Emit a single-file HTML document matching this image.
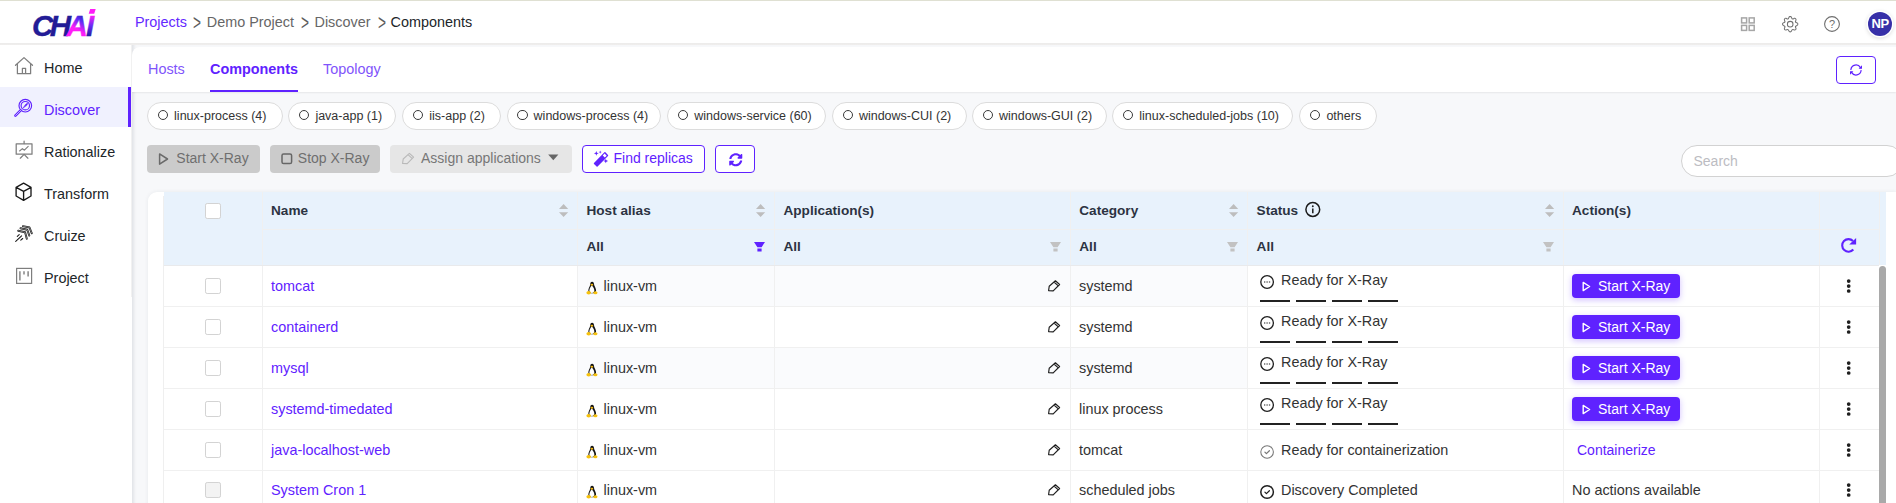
<!DOCTYPE html>
<html lang="en">
<head>
<meta charset="utf-8">
<title>CHAi - Components</title>
<style>
*{box-sizing:border-box;margin:0;padding:0}
html,body{width:1896px;height:503px;overflow:hidden;background:#fff}
body{font-family:"Liberation Sans",Arial,sans-serif;color:#212529;position:relative;font-size:14.4px}
.abs{position:absolute}
svg{position:absolute;overflow:visible}
#topline{left:0;top:0;width:1896px;height:1px;background:#dfe0d2}
#header{left:0;top:1px;width:1896px;height:42px;background:#fff;z-index:5}
#hband{left:0;top:43px;width:1896px;height:2px;background:linear-gradient(#ecebea,#f0eeed);z-index:5}
#crumbs{left:0.5px;top:3px;height:36px;line-height:36px;font-size:14.4px;white-space:nowrap;color:#212529}
#crumbs span{position:absolute;top:0}
#crumbs .p{color:#6428ff}
#crumbs .g{color:#666}
#crumbs .s{color:#5c5c5c;font-size:18px;top:0.5px;transform:scale(.76,1.25);transform-origin:0 52%}
#avatar{left:1868.2px;top:11px;width:24px;height:24px;border-radius:50%;background:#3730a8;color:#fff;font-weight:bold;font-size:13px;line-height:24px;text-align:center;box-shadow:0 0 0 1.5px #fff,0 1px 4px 1px rgba(0,0,0,.16);letter-spacing:-.3px}
#sidebar{left:0;top:45px;width:132px;height:458px;background:#fff;z-index:3}
#sbline{left:131px;top:45px;width:1px;height:252px;background:#f1f1f1;z-index:4}
.nav{position:absolute;left:0;width:131px;height:40px;font-size:14.4px;color:#212529;white-space:nowrap}
.nav span{position:absolute;left:44px;top:3px;height:40px;line-height:40px}
.nav.on{background:#f0f1fe;color:#5f22ff;border-right:3px solid #5f22ff}
#main{left:132px;top:45px;width:1764px;height:458px;background:#f7f8fa;z-index:1;box-shadow:inset 4px 0 3px -2px rgba(40,50,70,.10)}
#tabs{left:132px;top:47px;width:1764px;height:45px;background:#fff;border-top-left-radius:8px;box-shadow:0 1px 2px rgba(0,0,0,.07);z-index:2}
.tab{position:absolute;top:0;height:45px;line-height:44px;font-size:14.4px;color:#7f54fb;white-space:nowrap}
.tab.on{color:#5f22ff;font-weight:bold;border-bottom:2px solid #5f22ff}
#rbtn{left:1836px;top:56px;width:40px;height:28px;border:1px solid #5f22ff;border-radius:4px;background:#fff;z-index:3}
#chips{left:0;top:102px;z-index:2}
.chip{position:absolute;top:0;height:28px;line-height:26px;border:1px solid #dcdcdc;border-radius:14px;background:#fff;font-size:12.5px;color:#333;white-space:nowrap;padding:0 0 0 26px}
.chip i{position:absolute;left:9.9px;top:7px;width:10.2px;height:10.2px;border:1.15px solid #3a3a3a;border-radius:50%}
.btn{position:absolute;top:145px;height:28px;line-height:26px;border-radius:4px;font-size:14px;white-space:nowrap;z-index:2}
.btn span{position:absolute;top:0}
#search{left:1681px;top:145px;width:222px;height:32px;border:1px solid #d2d2d2;border-radius:16px;background:#fff;font-size:14px;color:#bcbcc2;line-height:30px;padding-left:11.5px;z-index:2}
#tbl{left:148px;top:192px;width:1748px;height:320px;background:#fff;border-top-left-radius:9px;z-index:2;box-shadow:0 0 4px rgba(30,40,60,.07)}
#thead{left:164px;top:192px;width:1722px;height:73px;background:#e8f2fc;z-index:3}
#hshadow{left:164px;top:265px;width:1715px;height:1px;background:#e9eaec;z-index:3}
.th{position:absolute;height:37px;line-height:37px;font-size:13.6px;font-weight:bold;color:#2c3342;white-space:nowrap;z-index:4}
.row{position:absolute;left:164px;width:1715px;height:41px;border-bottom:1px solid #f0f0f0;background:#fff;z-index:3}
.tint{position:absolute;top:0;height:40px;background:#fafbfd}
.c{position:absolute;top:0;height:41px;line-height:41px;white-space:nowrap;font-size:14.4px;color:#333}
.vl{position:absolute;width:1px;background:#f0f0f0;z-index:4}
.cb{position:absolute;width:16px;height:16px;border:1px solid #d3d3d3;border-radius:2.2px;background:#fff;z-index:4}
.l{color:#5f22ff}
.xb{position:absolute;left:1408px;top:8px;width:108px;height:24px;border-radius:4px;background:#5f22ff;color:#fff;font-size:14px;line-height:24px;box-shadow:0 2px 6px rgba(95,34,255,.28)}
.xb span{position:absolute;left:26px;top:0}
.dash{position:absolute;top:33.5px;height:2.5px;width:30px;background:#222}
#scroll{left:1879px;top:266px;width:7px;height:250px;border-radius:3.5px;background:#a9a9a9;z-index:5}
</style>
</head>
<body>
<div id="topline" class="abs"></div>
<div id="hband" class="abs"></div>
<div id="header" class="abs">
<svg id="logo" style="left:28px;top:3px" width="76" height="38" viewBox="28 4 76 38">
<defs>
<linearGradient id="ga" gradientUnits="userSpaceOnUse" x1="88" y1="10.6" x2="70.9" y2="38.6"><stop offset="0" stop-color="#241c98"/><stop offset="0.18" stop-color="#2f20b0"/><stop offset="0.38" stop-color="#5a2cf5"/><stop offset="0.66" stop-color="#ff1cf7"/><stop offset="1" stop-color="#ff1cf7"/></linearGradient>
<linearGradient id="gi" gradientUnits="userSpaceOnUse" x1="87.6" y1="42" x2="90.1" y2="8.9"><stop offset="0" stop-color="#241c98"/><stop offset="0.22" stop-color="#2b1fa8"/><stop offset="0.5" stop-color="#6a2cf5"/><stop offset="0.8" stop-color="#ff1cf7"/><stop offset="1" stop-color="#ff1cf7"/></linearGradient>
</defs>
<text y="35.7" font-family="Liberation Sans, Arial, sans-serif" font-weight="bold" font-style="italic" font-size="29.6" fill="#231c96" stroke="#231c96" stroke-width=".35"><tspan x="32">C</tspan><tspan x="49.8">H</tspan><tspan x="66.6" fill="url(#ga)" stroke="url(#ga)">A</tspan><tspan x="86" fill="url(#gi)" stroke="url(#gi)" stroke-width=".3">I</tspan></text>
<polygon points="90.2,9 95.7,9 94.2,13.8 88.7,13.8" fill="#ff1cf7"/>
</svg>
<div id="crumbs" class="abs"><span class="p" style="left:134.4px">Projects</span><span class="s" style="left:192.6px">&gt;</span><span class="g" style="left:206.3px">Demo Project</span><span class="s" style="left:300.1px">&gt;</span><span class="g" style="left:314px">Discover</span><span class="s" style="left:377px">&gt;</span><span style="left:390px">Components</span></div>
<svg style="left:1740px;top:15px" width="16" height="16" viewBox="0 0 16 16" fill="none" stroke="#a6a6a6" stroke-width="1.5"><rect x="1.6" y="1.9" width="5" height="5"/><rect x="9.2" y="1.9" width="5" height="5"/><rect x="1.6" y="9.4" width="5" height="5"/><rect x="9.2" y="9.4" width="5" height="5"/></svg>
<svg style="left:1782px;top:14.800px" width="16.400" height="16.400" viewBox="0 0 16 16" fill="#707070"><path d="M8 4.754a3.246 3.246 0 1 0 0 6.492 3.246 3.246 0 0 0 0-6.492zM5.754 8a2.246 2.246 0 1 1 4.492 0 2.246 2.246 0 0 1-4.492 0z"/><path d="M9.796 1.343c-.527-1.79-3.065-1.79-3.592 0l-.094.319a.873.873 0 0 1-1.255.52l-.292-.16c-1.64-.892-3.433.902-2.54 2.541l.159.292a.873.873 0 0 1-.52 1.255l-.319.094c-1.79.527-1.79 3.065 0 3.592l.319.094a.873.873 0 0 1 .52 1.255l-.16.292c-.892 1.64.901 3.434 2.541 2.54l.292-.159a.873.873 0 0 1 1.255.52l.094.319c.527 1.79 3.065 1.79 3.592 0l.094-.319a.873.873 0 0 1 1.255-.52l.292.16c1.64.893 3.434-.902 2.54-2.541l-.159-.292a.873.873 0 0 1 .52-1.255l.319-.094c1.79-.527 1.79-3.065 0-3.592l-.319-.094a.873.873 0 0 1-.52-1.255l.16-.292c.893-1.64-.902-3.433-2.541-2.54l-.292.159a.873.873 0 0 1-1.255-.52l-.094-.319zm-2.633.283c.246-.835 1.428-.835 1.674 0l.094.319a1.873 1.873 0 0 0 2.693 1.115l.291-.16c.764-.415 1.6.42 1.184 1.185l-.159.292a1.873 1.873 0 0 0 1.116 2.692l.318.094c.835.246.835 1.428 0 1.674l-.319.094a1.873 1.873 0 0 0-1.115 2.693l.16.291c.415.764-.42 1.6-1.185 1.184l-.291-.159a1.873 1.873 0 0 0-2.693 1.116l-.094.318c-.246.835-1.428.835-1.674 0l-.094-.319a1.873 1.873 0 0 0-2.692-1.115l-.292.16c-.764.415-1.6-.42-1.184-1.185l.159-.291A1.873 1.873 0 0 0 1.945 8.93l-.319-.094c-.835-.246-.835-1.428 0-1.674l.319-.094A1.873 1.873 0 0 0 3.06 4.377l-.16-.292c-.415-.764.42-1.6 1.185-1.184l.292.159a1.873 1.873 0 0 0 2.692-1.115l.094-.319z"/></svg>
<svg style="left:1824px;top:15px" width="16" height="16" viewBox="0 0 16 16" fill="none" stroke="#6e6e6e"><circle cx="8" cy="8" r="7.4" stroke-width="1.1"/><text x="8" y="11.9" text-anchor="middle" font-family="Liberation Sans, Arial, sans-serif" font-size="11" fill="#6e6e6e" stroke="none">?</text></svg>
<div id="avatar" class="abs">NP</div>
</div>
<div id="sidebar" class="abs">
<div class="nav" style="top:0px"><svg style="left:14px;top:11px" width="20" height="19" viewBox="14 56 20 19" fill="none" stroke="#7e7e7e" stroke-width="1.25" stroke-linejoin="round" stroke-linecap="round"><path d="M15.5 65.3 L24 57.6 L32.5 65.3 M17.4 64.4 V73.7 H30.6 V64.4 M22.4 73.7 V68.3 H25.6 V73.7"/></svg><span>Home</span></div>
<div class="nav on" style="top:42px"><svg style="left:14px;top:11px" width="20" height="20" viewBox="14 98 20 20" fill="none" stroke="#5f22ff" stroke-width="1.15" stroke-linecap="round"><circle cx="25.3" cy="105.7" r="6.3"/><circle cx="25.3" cy="105.7" r="4.2"/><path d="M20.6 110.4 L15.4 115.6" stroke-width="2.6"/><path d="M20.6 110.4 L15.6 115.4" stroke="#f0f1fe" stroke-width=".7"/><path d="M22.9 108.1 L26.0 104.0 L27.7 103.3 L27.0 105.0 Z" fill="#5f22ff" stroke-width=".6"/></svg><span>Discover</span></div>
<div class="nav" style="top:84px"><svg style="left:14px;top:11px" width="20" height="20" viewBox="14 140 20 20" fill="none" stroke="#7e7e7e" stroke-width="1.25" stroke-linecap="round" stroke-linejoin="round"><rect x="16.2" y="143.8" width="15.8" height="10.4"/><path d="M24.1 141.2 V143.6 M24.1 154.4 L20.3 158.2 M24.1 154.4 L27.9 158.2"/><path d="M19.6 151 L22.4 148.6 L24.4 150.2 L28.2 146.4" stroke-width="1.1"/></svg><span>Rationalize</span></div>
<div class="nav" style="top:126px"><svg style="left:14px;top:11px" width="20" height="20" viewBox="14 182 20 20" fill="none" stroke="#1a1a1a" stroke-width="1.35" stroke-linejoin="round"><path d="M23.6 183.2 L31 187.3 V196 L23.6 200.4 L16.1 196 V187.3 Z M16.1 187.3 L23.6 191.4 L31 187.3 M23.6 191.4 V200.4"/></svg><span>Transform</span></div>
<div class="nav" style="top:168px"><svg style="left:14px;top:11px" width="20" height="20" viewBox="14 224 20 20" fill="none" stroke-linejoin="round" stroke-linecap="round"><path d="M22.9 226.1 L29.5 227.5 L31.8 233.3" stroke="#111" stroke-width="1.9"/><path d="M22.9 226.1 L29.5 227.5 L31.8 233.3" stroke="#fff" stroke-width=".45"/><path d="M20.5 228.3 L27.3 229.8 L29.3 235.6" stroke="#111" stroke-width="1.9"/><path d="M20.5 228.3 L27.3 229.8 L29.3 235.6" stroke="#fff" stroke-width=".45"/><path d="M18.2 230.7 L25.1 232.3 L26.8 238.8" stroke="#111" stroke-width="1.9"/><path d="M18.2 230.7 L25.1 232.3 L26.8 238.8" stroke="#fff" stroke-width=".45"/><g stroke="#1a1a1a" stroke-width="1.1"><path d="M15.700 241.400 L21.600 235.800"/><path d="M17.300 236.400 L19.200 234.700"/><path d="M20.800 240.200 L22.700 238.500"/></g></svg><span>Cruize</span></div>
<div class="nav" style="top:210px"><svg style="left:14px;top:11px" width="20" height="20" viewBox="14 266 20 20" fill="none" stroke="#7e7e7e" stroke-width="1.2"><rect x="16.6" y="268.4" width="15" height="15"/><path d="M19.9 271.3 V280.5 M24 271.3 V274.6 M28.1 271.3 V276.5" stroke-width="1.4"/></svg><span>Project</span></div>
</div>
<div id="sbline" class="abs"></div>
<div id="main" class="abs"></div>
<div id="tabs" class="abs"><div class="tab" style="left:16px">Hosts</div><div class="tab on" style="left:78px">Components</div><div class="tab" style="left:191px">Topology</div></div>
<div id="rbtn" class="abs"><svg style="left:8px;top:2px" width="22" height="22" viewBox="1845 59 22 22" fill="none" stroke="#5f22ff" stroke-width="1.25" stroke-linecap="round"><path d="M1850.9 69.5 A5.1 5.1 0 0 1 1860.4 67.6"/><path d="M1861.1 70.5 A5.1 5.1 0 0 1 1851.6 72.4"/><path d="M1862.0 65.3 V68.8 H1858.6 Z M1850.0 74.7 V71.2 H1853.4 Z" fill="#5f22ff" stroke="none"/></svg></div>
<div id="chips" class="abs"><div class="chip" style="left:147.1px;width:135.5px"><i></i>linux-process (4)</div><div class="chip" style="left:288.4px;width:108.1px"><i></i>java-app (1)</div><div class="chip" style="left:402.3px;width:98.5px"><i></i>iis-app (2)</div><div class="chip" style="left:506.6px;width:154.9px"><i></i>windows-process (4)</div><div class="chip" style="left:667.3px;width:158.9px"><i></i>windows-service (60)</div><div class="chip" style="left:831.9px;width:134.7px"><i></i>windows-CUI (2)</div><div class="chip" style="left:972px;width:134.5px"><i></i>windows-GUI (2)</div><div class="chip" style="left:1112.3px;width:181.1px"><i></i>linux-scheduled-jobs (10)</div><div class="chip" style="left:1299.4px;width:77.5px"><i></i>others</div></div>
<div class="btn" style="left:147px;width:113px;background:#cbcbcb;color:#6f6f6f"><svg style="left:11px;top:7px" width="12" height="14" viewBox="0 0 12 14" fill="none" stroke="#6a6a6a" stroke-width="1.5" stroke-linejoin="round"><path d="M1.600 1.900 L9.500 7 L1.600 12.100 Z"/></svg><span style="left:29.300px">Start X-Ray</span></div>
<div class="btn" style="left:270px;width:110px;background:#cbcbcb;color:#6f6f6f"><svg style="left:11px;top:8px" width="12" height="12" viewBox="0 0 12 12" fill="none" stroke="#666" stroke-width="1.5"><rect x="1" y="1" width="9.6" height="9.6" rx="1.6"/></svg><span style="left:27.800px">Stop X-Ray</span></div>
<div class="btn" style="left:390px;width:182px;background:#e6e6e6;color:#777"><svg style="left:12px;top:7.5px" width="12" height="12" viewBox="0 0 12 12" fill="none" stroke="#b9b9b9" stroke-width="1.1" stroke-linejoin="round"><path d="M.6 10.4 L1.2 6 L7.4 .4 L11.6 4.2 L5.2 10.6 Z M6 1.7 L10.3 5.6"/></svg><span style="left:31px">Assign applications</span><svg style="left:158px;top:9px" width="11" height="7" viewBox="0 0 11 7"><path d="M.2 .4 H10.4 L5.3 6.2 Z" fill="#666"/></svg></div>
<div class="btn" style="left:582px;width:123px;background:#fff;color:#5f22ff;border:1px solid #5f22ff;line-height:24px"><svg style="left:10px;top:3px" width="18" height="18" viewBox="593 150 18 18" fill="#5f22ff"><path d="M594.0 164.0 L604.4 153.3 Q604.9 152.800 605.400 153.300 L608.0 155.900 Q608.500 156.400 608.0 156.900 L597.600 167.500 Q597.100 168.0 596.600 167.500 L594.0 165.0 Q593.500 164.500 594.0 164.0 Z M602.700 156.500 L604.800 158.600 L606.700 156.700 L604.600 154.600 Z" fill-rule="evenodd"/><path d="M596.300 151.900 L596.950 153.650 L598.700 154.300 L596.950 154.950 L596.300 156.700 L595.650 154.950 L593.900 154.300 L595.650 153.650 Z"/><path d="M600.200 151.500 L600.600 152.700 L601.800 153.100 L600.600 153.500 L600.200 154.700 L599.800 153.500 L598.600 153.100 L599.800 152.700 Z"/><path d="M605.800 159.700 L606.450 161.350 L608.100 162.0 L606.450 162.650 L605.800 164.300 L605.150 162.650 L603.500 162.0 L605.150 161.350 Z"/></svg><span style="left:30.5px">Find replicas</span></div>
<div class="btn" style="left:715px;width:40px;background:#fff;border:1px solid #5f22ff"><svg style="left:12.5px;top:6.5px" width="13.5" height="13.5" viewBox="0 0 512 512" fill="#5f22ff"><path d="M370.72 133.28C339.458 104.008 298.888 87.962 255.848 88c-77.458.068-144.328 53.178-162.791 126.850-1.344 5.363-6.122 9.150-11.651 9.150H24.103c-7.498 0-13.194-6.807-11.807-14.176C33.933 94.924 134.813 8 256 8c66.448 0 126.791 26.136 171.315 68.685L463.030 40.970C478.149 25.851 504 36.559 504 57.941V192c0 13.255-10.745 24-24 24H345.941c-21.382 0-32.090-25.851-16.971-40.971l41.750-41.749zM32 296h134.059c21.382 0 32.090 25.851 16.971 40.971l-41.750 41.750c31.262 29.273 71.835 45.319 114.876 45.280 77.418-.070 144.315-53.144 162.787-126.849 1.344-5.363 6.122-9.150 11.651-9.150h57.304c7.498 0 13.194 6.807 11.807 14.176C478.067 417.076 377.187 504 256 504c-66.448 0-126.791-26.136-171.315-68.685L48.970 471.030C33.851 486.149 8 475.441 8 454.059V320c0-13.255 10.745-24 24-24z"/></svg></div>
<div id="search" class="abs">Search</div>
<div id="tbl" class="abs"></div>
<div id="thead" class="abs"></div>
<div id="hshadow" class="abs"></div>
<div class="vl" style="left:163px;top:196px;height:310px;background:#efefef"></div>
<div class="vl" style="left:262px;top:192px;height:73px;background:#f0f0f0"></div><div class="vl" style="left:262px;top:266px;height:240px"></div><div class="vl" style="left:577px;top:192px;height:73px;background:#f0f0f0"></div><div class="vl" style="left:577px;top:266px;height:240px"></div><div class="vl" style="left:774px;top:192px;height:73px;background:#f0f0f0"></div><div class="vl" style="left:774px;top:266px;height:240px"></div><div class="vl" style="left:1070px;top:192px;height:73px;background:#f0f0f0"></div><div class="vl" style="left:1070px;top:266px;height:240px"></div><div class="vl" style="left:1247px;top:192px;height:73px;background:#f0f0f0"></div><div class="vl" style="left:1247px;top:266px;height:240px"></div><div class="vl" style="left:1563px;top:192px;height:73px;background:#f0f0f0"></div><div class="vl" style="left:1563px;top:266px;height:240px"></div><div class="vl" style="left:1819px;top:192px;height:73px;background:#f0f0f0"></div><div class="vl" style="left:1819px;top:266px;height:240px"></div><div class="vl" style="left:1879px;top:192px;height:73px;background:#f0f0f0"></div>
<div class="abs" style="left:263px;top:229px;width:1616px;height:1px;background:#f0f0f0;z-index:4"></div>
<div class="cb" style="left:205px;top:203px"></div>
<div class="th" style="left:271px;top:192px">Name</div><svg style="left:558.6999999999999px;top:204px;z-index:4" width="9.2" height="13" viewBox="0 0 9.2 13" fill="#bdbdbd"><path d="M0 4.9 L4.6 0 L9.2 4.9 Z M0 8.3 H9.2 L4.6 13 Z"/></svg><div class="th" style="left:586.5px;top:192px">Host alias</div><svg style="left:755.6px;top:204px;z-index:4" width="9.2" height="13" viewBox="0 0 9.2 13" fill="#bdbdbd"><path d="M0 4.9 L4.6 0 L9.2 4.9 Z M0 8.3 H9.2 L4.6 13 Z"/></svg><div class="th" style="left:586.5px;top:228px">All</div><div class="th" style="left:783.5px;top:192px">Application(s)</div><div class="th" style="left:783.5px;top:228px">All</div><div class="th" style="left:1079.3px;top:192px">Category</div><svg style="left:1228.7px;top:204px;z-index:4" width="9.2" height="13" viewBox="0 0 9.2 13" fill="#bdbdbd"><path d="M0 4.9 L4.6 0 L9.2 4.9 Z M0 8.3 H9.2 L4.6 13 Z"/></svg><div class="th" style="left:1079.3px;top:228px">All</div><div class="th" style="left:1256.6px;top:192px">Status</div><svg style="left:1544.7px;top:204px;z-index:4" width="9.2" height="13" viewBox="0 0 9.2 13" fill="#bdbdbd"><path d="M0 4.9 L4.6 0 L9.2 4.9 Z M0 8.3 H9.2 L4.6 13 Z"/></svg><div class="th" style="left:1256.6px;top:228px">All</div><div class="th" style="left:1572px;top:192px">Action(s)</div><svg style="left:754.3px;top:242.3px;z-index:4" width="11" height="9.6" viewBox="0 0 11 9.6" fill="#5f22ff"><path d="M0 0 H11 L7.6 5.2 H3.4 Z M3.4 6.6 H7.6 V9.6 H3.4 Z"/></svg><svg style="left:1050.0px;top:242.3px;z-index:4" width="11" height="9.6" viewBox="0 0 11 9.6" fill="#c2c2c2"><path d="M0 0 H11 L7.6 5.2 H3.4 Z M3.4 6.6 H7.6 V9.6 H3.4 Z"/></svg><svg style="left:1227.3px;top:242.3px;z-index:4" width="11" height="9.6" viewBox="0 0 11 9.6" fill="#c2c2c2"><path d="M0 0 H11 L7.6 5.2 H3.4 Z M3.4 6.6 H7.6 V9.6 H3.4 Z"/></svg><svg style="left:1543.3px;top:242.3px;z-index:4" width="11" height="9.6" viewBox="0 0 11 9.6" fill="#c2c2c2"><path d="M0 0 H11 L7.6 5.2 H3.4 Z M3.4 6.6 H7.6 V9.6 H3.4 Z"/></svg>
<svg style="left:1305px;top:202px;z-index:4" width="16" height="16" viewBox="0 0 16 16" fill="none" stroke="#1c1c1c"><circle cx="7.8" cy="7.5" r="6.9" stroke-width="1.5"/><path d="M7.8 6.6 V11.2" stroke-width="1.5"/><circle cx="7.8" cy="4.2" r=".95" fill="#1c1c1c" stroke="none"/></svg>
<svg style="left:1838px;top:234px;z-index:4" width="22" height="22" viewBox="1838 234 22 22" fill="none" stroke="#5f22ff" stroke-width="2.1"><path d="M1853.0 241.0 A6.3 6.3 0 1 0 1853.3 249.5"/><path d="M1849.2 244.5 H1856.1 V237.9 Z" fill="#5f22ff" stroke="none"/></svg>
<div class="row" style="top:266px"><div class="tint" style="left:414px;width:669px"></div><div class="cb" style="left:41px;top:11.500px"></div><div class="c l" style="left:107px">tomcat</div><svg style="left:422px;top:15px" width="12" height="14" viewBox="0 0 12 14"><path d="M6.100 .700 C4.700 .700 4.200 1.800 4.300 3 C4.400 4.400 3 6.200 2.500 8.300 C2.100 10 2.400 12.300 6 12.300 C9.600 12.300 10.300 10.500 10 8.800 C9.600 6.400 8 4.600 8 3 C8 1.800 7.500 .700 6.100 .700 Z" fill="#151515"/><path d="M5.700 4.600 C4.600 5.600 3.400 7.800 3.400 9.600 C3.400 11.200 4.400 12.100 5.900 12.100 C7.400 12.100 8.300 11.200 8.300 9.600 C8.300 7.800 7 5.600 5.700 4.600 Z" fill="#fff"/><ellipse cx="5.900" cy="3.800" rx="1.350" ry="1.050" fill="#f2b60c"/><ellipse cx="2.700" cy="11.700" rx="2.300" ry="1.700" fill="#f7c20d"/><ellipse cx="9.400" cy="11.800" rx="2.100" ry="1.550" fill="#f7c20d"/></svg><div class="c" style="left:439.500px">linux-vm</div><svg style="left:884px;top:14px" width="12" height="12" viewBox="0 0 12 11.400" fill="none" stroke="#1f1f1f" stroke-width="1.15" stroke-linejoin="round"><path d="M.6 10.300 L1.200 6 L7.400 .5 L11.600 4.200 L5.200 10.600 Z M6 1.700 L10.300 5.600"/></svg><div class="c" style="left:915px">systemd</div><svg style="left:1096px;top:8.500px" width="15" height="15" viewBox="0 0 15 15" fill="none" stroke="#1f1f1f"><circle cx="7.100" cy="7" r="6.300" stroke-width="1.300"/><path d="M4 7 H10.200" stroke-width="1.100" stroke-dasharray="1.300 1.150"/></svg><div class="c" style="left:1117px;top:-6.500px">Ready for X-Ray</div><div class="dash" style="left:1096px"></div><div class="dash" style="left:1132px"></div><div class="dash" style="left:1168px"></div><div class="dash" style="left:1204px"></div><div class="xb"><svg style="left:10px;top:6.500px" width="9" height="11" viewBox="0 0 9 11" fill="none" stroke="#fff" stroke-width="1.400" stroke-linejoin="round"><path d="M1.200 1.400 L7.600 5.500 L1.200 9.600 Z"/></svg><span>Start X-Ray</span></div><svg style="left:1682px;top:13px" width="6" height="15" viewBox="0 0 6 15" fill="#1f1f1f"><circle cx="2.700" cy="2.100" r="1.850"/><circle cx="2.700" cy="7.100" r="1.850"/><circle cx="2.700" cy="12.000" r="1.850"/></svg></div>
<div class="row" style="top:307px"><div class="cb" style="left:41px;top:11.500px"></div><div class="c l" style="left:107px">containerd</div><svg style="left:422px;top:15px" width="12" height="14" viewBox="0 0 12 14"><path d="M6.100 .700 C4.700 .700 4.200 1.800 4.300 3 C4.400 4.400 3 6.200 2.500 8.300 C2.100 10 2.400 12.300 6 12.300 C9.600 12.300 10.300 10.500 10 8.800 C9.600 6.400 8 4.600 8 3 C8 1.800 7.500 .700 6.100 .700 Z" fill="#151515"/><path d="M5.700 4.600 C4.600 5.600 3.400 7.800 3.400 9.600 C3.400 11.200 4.400 12.100 5.900 12.100 C7.400 12.100 8.300 11.200 8.300 9.600 C8.300 7.800 7 5.600 5.700 4.600 Z" fill="#fff"/><ellipse cx="5.900" cy="3.800" rx="1.350" ry="1.050" fill="#f2b60c"/><ellipse cx="2.700" cy="11.700" rx="2.300" ry="1.700" fill="#f7c20d"/><ellipse cx="9.400" cy="11.800" rx="2.100" ry="1.550" fill="#f7c20d"/></svg><div class="c" style="left:439.500px">linux-vm</div><svg style="left:884px;top:14px" width="12" height="12" viewBox="0 0 12 11.400" fill="none" stroke="#1f1f1f" stroke-width="1.15" stroke-linejoin="round"><path d="M.6 10.300 L1.200 6 L7.400 .5 L11.600 4.200 L5.200 10.600 Z M6 1.700 L10.300 5.600"/></svg><div class="c" style="left:915px">systemd</div><svg style="left:1096px;top:8.500px" width="15" height="15" viewBox="0 0 15 15" fill="none" stroke="#1f1f1f"><circle cx="7.100" cy="7" r="6.300" stroke-width="1.300"/><path d="M4 7 H10.200" stroke-width="1.100" stroke-dasharray="1.300 1.150"/></svg><div class="c" style="left:1117px;top:-6.500px">Ready for X-Ray</div><div class="dash" style="left:1096px"></div><div class="dash" style="left:1132px"></div><div class="dash" style="left:1168px"></div><div class="dash" style="left:1204px"></div><div class="xb"><svg style="left:10px;top:6.500px" width="9" height="11" viewBox="0 0 9 11" fill="none" stroke="#fff" stroke-width="1.400" stroke-linejoin="round"><path d="M1.200 1.400 L7.600 5.500 L1.200 9.600 Z"/></svg><span>Start X-Ray</span></div><svg style="left:1682px;top:13px" width="6" height="15" viewBox="0 0 6 15" fill="#1f1f1f"><circle cx="2.700" cy="2.100" r="1.850"/><circle cx="2.700" cy="7.100" r="1.850"/><circle cx="2.700" cy="12.000" r="1.850"/></svg></div>
<div class="row" style="top:348px"><div class="tint" style="left:414px;width:669px"></div><div class="cb" style="left:41px;top:11.500px"></div><div class="c l" style="left:107px">mysql</div><svg style="left:422px;top:15px" width="12" height="14" viewBox="0 0 12 14"><path d="M6.100 .700 C4.700 .700 4.200 1.800 4.300 3 C4.400 4.400 3 6.200 2.500 8.300 C2.100 10 2.400 12.300 6 12.300 C9.600 12.300 10.300 10.500 10 8.800 C9.600 6.400 8 4.600 8 3 C8 1.800 7.500 .700 6.100 .700 Z" fill="#151515"/><path d="M5.700 4.600 C4.600 5.600 3.400 7.800 3.400 9.600 C3.400 11.200 4.400 12.100 5.900 12.100 C7.400 12.100 8.300 11.200 8.300 9.600 C8.300 7.800 7 5.600 5.700 4.600 Z" fill="#fff"/><ellipse cx="5.900" cy="3.800" rx="1.350" ry="1.050" fill="#f2b60c"/><ellipse cx="2.700" cy="11.700" rx="2.300" ry="1.700" fill="#f7c20d"/><ellipse cx="9.400" cy="11.800" rx="2.100" ry="1.550" fill="#f7c20d"/></svg><div class="c" style="left:439.500px">linux-vm</div><svg style="left:884px;top:14px" width="12" height="12" viewBox="0 0 12 11.400" fill="none" stroke="#1f1f1f" stroke-width="1.15" stroke-linejoin="round"><path d="M.6 10.300 L1.200 6 L7.400 .5 L11.600 4.200 L5.200 10.600 Z M6 1.700 L10.300 5.600"/></svg><div class="c" style="left:915px">systemd</div><svg style="left:1096px;top:8.500px" width="15" height="15" viewBox="0 0 15 15" fill="none" stroke="#1f1f1f"><circle cx="7.100" cy="7" r="6.300" stroke-width="1.300"/><path d="M4 7 H10.200" stroke-width="1.100" stroke-dasharray="1.300 1.150"/></svg><div class="c" style="left:1117px;top:-6.500px">Ready for X-Ray</div><div class="dash" style="left:1096px"></div><div class="dash" style="left:1132px"></div><div class="dash" style="left:1168px"></div><div class="dash" style="left:1204px"></div><div class="xb"><svg style="left:10px;top:6.500px" width="9" height="11" viewBox="0 0 9 11" fill="none" stroke="#fff" stroke-width="1.400" stroke-linejoin="round"><path d="M1.200 1.400 L7.600 5.500 L1.200 9.600 Z"/></svg><span>Start X-Ray</span></div><svg style="left:1682px;top:13px" width="6" height="15" viewBox="0 0 6 15" fill="#1f1f1f"><circle cx="2.700" cy="2.100" r="1.850"/><circle cx="2.700" cy="7.100" r="1.850"/><circle cx="2.700" cy="12.000" r="1.850"/></svg></div>
<div class="row" style="top:389px"><div class="cb" style="left:41px;top:11.500px"></div><div class="c l" style="left:107px">systemd-timedated</div><svg style="left:422px;top:15px" width="12" height="14" viewBox="0 0 12 14"><path d="M6.100 .700 C4.700 .700 4.200 1.800 4.300 3 C4.400 4.400 3 6.200 2.500 8.300 C2.100 10 2.400 12.300 6 12.300 C9.600 12.300 10.300 10.500 10 8.800 C9.600 6.400 8 4.600 8 3 C8 1.800 7.500 .700 6.100 .700 Z" fill="#151515"/><path d="M5.700 4.600 C4.600 5.600 3.400 7.800 3.400 9.600 C3.400 11.200 4.400 12.100 5.900 12.100 C7.400 12.100 8.300 11.200 8.300 9.600 C8.300 7.800 7 5.600 5.700 4.600 Z" fill="#fff"/><ellipse cx="5.900" cy="3.800" rx="1.350" ry="1.050" fill="#f2b60c"/><ellipse cx="2.700" cy="11.700" rx="2.300" ry="1.700" fill="#f7c20d"/><ellipse cx="9.400" cy="11.800" rx="2.100" ry="1.550" fill="#f7c20d"/></svg><div class="c" style="left:439.500px">linux-vm</div><svg style="left:884px;top:14px" width="12" height="12" viewBox="0 0 12 11.400" fill="none" stroke="#1f1f1f" stroke-width="1.15" stroke-linejoin="round"><path d="M.6 10.300 L1.200 6 L7.400 .5 L11.600 4.200 L5.200 10.600 Z M6 1.700 L10.300 5.600"/></svg><div class="c" style="left:915px">linux process</div><svg style="left:1096px;top:8.500px" width="15" height="15" viewBox="0 0 15 15" fill="none" stroke="#1f1f1f"><circle cx="7.100" cy="7" r="6.300" stroke-width="1.300"/><path d="M4 7 H10.200" stroke-width="1.100" stroke-dasharray="1.300 1.150"/></svg><div class="c" style="left:1117px;top:-6.500px">Ready for X-Ray</div><div class="dash" style="left:1096px"></div><div class="dash" style="left:1132px"></div><div class="dash" style="left:1168px"></div><div class="dash" style="left:1204px"></div><div class="xb"><svg style="left:10px;top:6.500px" width="9" height="11" viewBox="0 0 9 11" fill="none" stroke="#fff" stroke-width="1.400" stroke-linejoin="round"><path d="M1.200 1.400 L7.600 5.500 L1.200 9.600 Z"/></svg><span>Start X-Ray</span></div><svg style="left:1682px;top:13px" width="6" height="15" viewBox="0 0 6 15" fill="#1f1f1f"><circle cx="2.700" cy="2.100" r="1.850"/><circle cx="2.700" cy="7.100" r="1.850"/><circle cx="2.700" cy="12.000" r="1.850"/></svg></div>
<div class="row" style="top:430px"><div class="cb" style="left:41px;top:11.500px"></div><div class="c l" style="left:107px">java-localhost-web</div><svg style="left:422px;top:15px" width="12" height="14" viewBox="0 0 12 14"><path d="M6.100 .700 C4.700 .700 4.200 1.800 4.300 3 C4.400 4.400 3 6.200 2.500 8.300 C2.100 10 2.400 12.300 6 12.300 C9.600 12.300 10.300 10.500 10 8.800 C9.600 6.400 8 4.600 8 3 C8 1.800 7.500 .700 6.100 .700 Z" fill="#151515"/><path d="M5.700 4.600 C4.600 5.600 3.400 7.800 3.400 9.600 C3.400 11.200 4.400 12.100 5.900 12.100 C7.400 12.100 8.300 11.200 8.300 9.600 C8.300 7.800 7 5.600 5.700 4.600 Z" fill="#fff"/><ellipse cx="5.900" cy="3.800" rx="1.350" ry="1.050" fill="#f2b60c"/><ellipse cx="2.700" cy="11.700" rx="2.300" ry="1.700" fill="#f7c20d"/><ellipse cx="9.400" cy="11.800" rx="2.100" ry="1.550" fill="#f7c20d"/></svg><div class="c" style="left:439.500px">linux-vm</div><svg style="left:884px;top:14px" width="12" height="12" viewBox="0 0 12 11.400" fill="none" stroke="#1f1f1f" stroke-width="1.15" stroke-linejoin="round"><path d="M.6 10.300 L1.200 6 L7.400 .5 L11.600 4.200 L5.200 10.600 Z M6 1.700 L10.300 5.600"/></svg><div class="c" style="left:915px">tomcat</div><svg style="left:1096px;top:14.5px" width="15" height="15" viewBox="0 0 15 15" fill="none" stroke="#777" stroke-linecap="round" stroke-linejoin="round"><circle cx="7.100" cy="7" r="6.300" stroke-width="1.050"/><path d="M4.900 7.100 L6.400 8.600 L9.400 5.700" stroke-width="1.200"/></svg><div class="c" style="left:1117px">Ready for containerization</div><div class="c l" style="left:1413px;font-size:14px">Containerize</div><svg style="left:1682px;top:13px" width="6" height="15" viewBox="0 0 6 15" fill="#1f1f1f"><circle cx="2.700" cy="2.100" r="1.850"/><circle cx="2.700" cy="7.100" r="1.850"/><circle cx="2.700" cy="12.000" r="1.850"/></svg></div>
<div class="row" style="top:471px"><div class="abs" style="left:0;top:-1px;width:1715px;height:41px"><div class="cb" style="left:41px;top:11.500px;background:#f3f3f3"></div><div class="c l" style="left:107px">System Cron 1</div><svg style="left:422px;top:15px" width="12" height="14" viewBox="0 0 12 14"><path d="M6.100 .700 C4.700 .700 4.200 1.800 4.300 3 C4.400 4.400 3 6.200 2.500 8.300 C2.100 10 2.400 12.300 6 12.300 C9.600 12.300 10.300 10.500 10 8.800 C9.600 6.400 8 4.600 8 3 C8 1.800 7.500 .700 6.100 .700 Z" fill="#151515"/><path d="M5.700 4.600 C4.600 5.600 3.400 7.800 3.400 9.600 C3.400 11.200 4.400 12.100 5.900 12.100 C7.400 12.100 8.300 11.200 8.300 9.600 C8.300 7.800 7 5.600 5.700 4.600 Z" fill="#fff"/><ellipse cx="5.900" cy="3.800" rx="1.350" ry="1.050" fill="#f2b60c"/><ellipse cx="2.700" cy="11.700" rx="2.300" ry="1.700" fill="#f7c20d"/><ellipse cx="9.400" cy="11.800" rx="2.100" ry="1.550" fill="#f7c20d"/></svg><div class="c" style="left:439.500px">linux-vm</div><svg style="left:884px;top:14px" width="12" height="12" viewBox="0 0 12 11.400" fill="none" stroke="#1f1f1f" stroke-width="1.15" stroke-linejoin="round"><path d="M.6 10.300 L1.200 6 L7.400 .5 L11.600 4.200 L5.200 10.600 Z M6 1.700 L10.300 5.600"/></svg><div class="c" style="left:915px">scheduled jobs</div><svg style="left:1096px;top:14.5px" width="15" height="15" viewBox="0 0 15 15" fill="none" stroke="#1f1f1f" stroke-linecap="round" stroke-linejoin="round"><circle cx="7.100" cy="7" r="6.300" stroke-width="1.500"/><path d="M4.900 7.100 L6.400 8.600 L9.400 5.700" stroke-width="1.200"/></svg><div class="c" style="left:1117px">Discovery Completed</div><div class="c" style="left:1408px">No actions available</div><svg style="left:1682px;top:13px" width="6" height="15" viewBox="0 0 6 15" fill="#1f1f1f"><circle cx="2.700" cy="2.100" r="1.850"/><circle cx="2.700" cy="7.100" r="1.850"/><circle cx="2.700" cy="12.000" r="1.850"/></svg></div></div>
<div id="scroll" class="abs"></div>
</body>
</html>
